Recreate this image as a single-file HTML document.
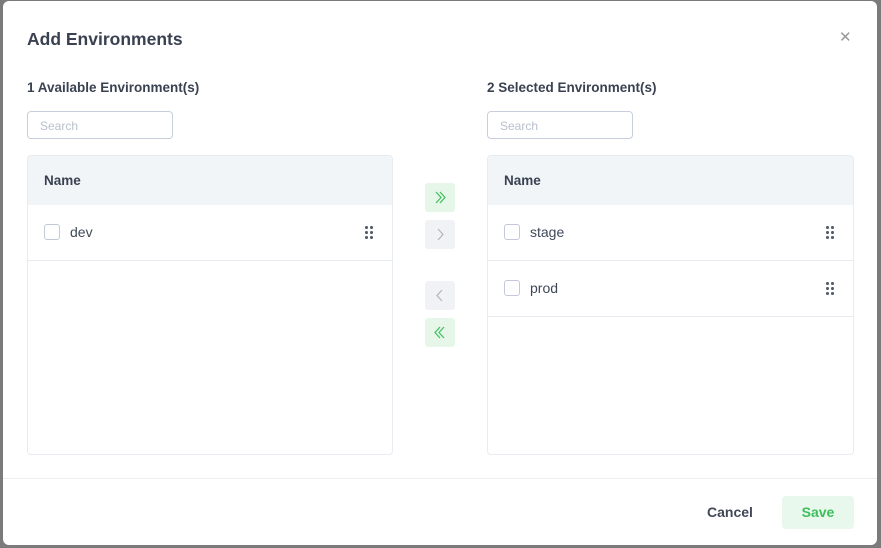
<!DOCTYPE html><html><head><style>
body{margin:0;width:881px;height:548px;background:#7b7b7b;font-family:"Liberation Sans",sans-serif;position:relative;overflow:hidden}
.m{position:absolute;left:3px;top:1px;width:874px;height:544px;background:#fff;border-radius:6px}
.t{position:absolute;left:24px;top:28px;font-size:17.5px;color:#3a4252;font-weight:bold}
.x{position:absolute;left:836px;top:27px;font-size:15px;color:#999}
.lbl{position:absolute;font-size:13.5px;color:#3a4252;top:79px;font-weight:bold}
.s{position:absolute;top:110px;width:146px;height:28px;border:1px solid #c8cfdc;border-radius:4px;box-sizing:border-box;font-size:12px;color:#b9c0cc;padding:7px 12px}
.p{position:absolute;top:154px;height:300px;border:1px solid #e8ebf0;border-radius:4px;box-sizing:border-box;overflow:hidden}
.h{height:49px;background:#f2f5f8;font-size:13.5px;color:#3a4252;padding:17px 16px;box-sizing:border-box;font-weight:bold}
.r{height:55px;border-bottom:1px solid #e8ebf0;position:relative;font-size:14px;color:#404858}
.cb{position:absolute;left:16px;top:19px;width:14px;height:14px;border:1px solid #c3c9d8;border-radius:3px}
.r span{position:absolute;left:42px;top:19px}
.d{position:absolute;right:18px;top:20px;width:10px;height:14px;background:radial-gradient(circle,#555c6b 1.4px,transparent 1.7px) 0 0/5px 5px}
.b{position:absolute;left:422px;width:30px;height:29px;border-radius:3px}
.g{background:#e6f7ea}.gr{background:#f1f2f5}
.ft{position:absolute;left:0;right:0;top:477px;border-top:1px solid #eceef2}
.c{position:absolute;left:704px;top:503px;font-size:14px;color:#404858;font-weight:bold}
.sv{position:absolute;left:779px;top:495px;width:72px;height:33px;background:#e8f8ec;border-radius:4px;color:#3cbf5a;font-size:14px;text-align:center;line-height:33px;font-weight:bold}
</style></head><body><div class="m">
<div class="t">Add Environments</div><div class="x">✕</div>
<div class="lbl" style="left:24px">1 Available Environment(s)</div>
<div class="lbl" style="left:484px">2 Selected Environment(s)</div>
<div class="s" style="left:24px">Search</div><div class="s" style="left:484px">Search</div>
<div class="p" style="left:24px;width:366px"><div class="h">Name</div>
<div class="r"><div class="cb"></div><span>dev</span><div class="d"></div></div></div>
<div class="p" style="left:484px;width:367px"><div class="h">Name</div>
<div class="r"><div class="cb"></div><span>stage</span><div class="d"></div></div>
<div class="r"><div class="cb"></div><span>prod</span><div class="d"></div></div></div>
<div class="b g" style="top:182px"><svg width="30" height="29"><path d="M11 9l5 5.5-5 5.5M15 9l5 5.5-5 5.5" stroke="#3cbf5a" fill="none" stroke-width="1.2"/></svg></div>
<div class="b gr" style="top:219px"><svg width="30" height="29"><path d="M13 9l5 5.5-5 5.5" stroke="#b0b5c0" fill="none" stroke-width="1.2"/></svg></div>
<div class="b gr" style="top:280px"><svg width="30" height="29"><path d="M17 9l-5 5.5 5 5.5" stroke="#b0b5c0" fill="none" stroke-width="1.2"/></svg></div>
<div class="b g" style="top:317px"><svg width="30" height="29"><path d="M15 9l-5 5.5 5 5.5M19 9l-5 5.5 5 5.5" stroke="#3cbf5a" fill="none" stroke-width="1.2"/></svg></div>
<div class="ft"></div>
<div class="c">Cancel</div><div class="sv">Save</div>
</div></body></html>
